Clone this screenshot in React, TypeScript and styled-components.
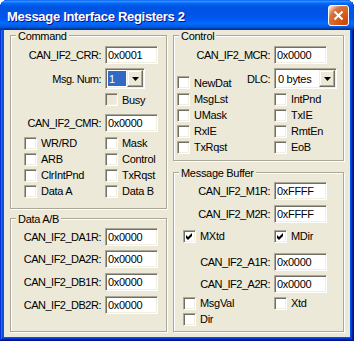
import React from 'react'
import styled, { createGlobalStyle } from 'styled-components'

const font = `'Liberation Sans', Arial, sans-serif`

const GlobalStyle = createGlobalStyle`
  html, body {
    margin: 0;
    padding: 0;
    background: #ffffff;
  }
`

const Window = styled.div`
  width: 354px;
  height: 341px;
  box-sizing: border-box;
  display: flex;
  flex-direction: column;
  border-radius: 8px 8px 0 0;
  background: #0054e3;
  box-shadow: inset -1px -1px #00138c, inset 1px 1px #0831d9,
    inset -2px -2px #001ea0, inset 2px 2px #166aee, inset -3px -3px #003bda,
    inset 3px 3px #0855dd;
  font-family: ${font};
  font-size: 11px;
  letter-spacing: -0.3px;
  color: #000;
`

const TitleBar = styled.div`
  height: 30px;
  flex: none;
  display: flex;
  align-items: flex-start;
  justify-content: space-between;
  padding: 0 5px 0 7px;
  border-radius: 8px 8px 0 0;
  background: linear-gradient(
    180deg,
    #0058ee 0%,
    #3a93ff 4%,
    #288eff 6%,
    #127dff 8%,
    #036ffc 10%,
    #0262ee 14%,
    #0057e5 20%,
    #0054e3 24%,
    #0055eb 56%,
    #005bf5 66%,
    #026afe 76%,
    #0062ef 86%,
    #0052d6 92%,
    #0040ab 94%,
    #003092 100%
  );
`

const Title = styled.span`
  margin-top: 10px;
  line-height: 14px;
  font-size: 13px;
  font-weight: bold;
  color: #fff;
  text-shadow: 1px 1px #0f1089;
  letter-spacing: -0.3px;
`

const CloseButton = styled.div`
  margin-top: 5px;
  width: 21px;
  height: 21px;
  box-sizing: border-box;
  border: 1px solid #fff;
  border-radius: 3px;
  background: radial-gradient(
    circle at 90% 90%,
    #cc4600 0%,
    #dc6527 55%,
    #cd7546 70%,
    #ffccb2 90%,
    #fff 100%
  );
  display: flex;
  align-items: center;
  justify-content: center;
`

const Body = styled.div`
  flex: 1;
  margin: 0 4px 4px;
  padding: 0 6px;
  background: #ece9d8;
  display: grid;
  grid-template-columns: 157px 171px;
  column-gap: 6px;
  align-items: start;
`

const Column = styled.div`
  display: flex;
  flex-direction: column;
`

const GroupBox = styled.div<{ $top: number; $height: number; $pad: number }>`
  position: relative;
  box-sizing: border-box;
  margin-top: ${(p) => p.$top}px;
  height: ${(p) => p.$height}px;
  padding-left: ${(p) => p.$pad}px;
  border: 1px solid #aca899;
  box-shadow: inset 1px 1px #fff, 1px 1px #fff;
  display: flex;
  flex-direction: column;
`

const Legend = styled.span`
  position: absolute;
  top: -6px;
  left: 5px;
  padding: 0 2px;
  line-height: 13px;
  background: #ece9d8;
`

const Row = styled.div<{ $lead: number; $top: number; $h: number }>`
  display: grid;
  grid-template-columns: ${(p) => p.$lead}px 1fr;
  align-items: center;
  height: ${(p) => p.$h}px;
  margin-top: ${(p) => p.$top}px;
`

const Label = styled.span`
  display: flex;
  justify-content: flex-end;
  white-space: nowrap;
  padding-right: 4px;
  letter-spacing: -0.5px;
`

const Lead = styled.div`
  display: flex;
  align-items: center;
  justify-content: space-between;
  align-self: stretch;
`

const TextBox = styled.input`
  box-sizing: border-box;
  width: 53px;
  height: 18px;
  margin: 0;
  padding: 0 0 0 2px;
  border: 1px solid;
  border-color: #aca899 #fff #fff #aca899;
  box-shadow: inset 1px 1px #716f64, inset -1px -1px #f1efe2;
  background: #fff;
  font: 11px ${font};
  letter-spacing: -0.3px;
  color: #000;
  outline: none;
`

const Combo = styled.div<{ $w: number }>`
  box-sizing: border-box;
  width: ${(p) => p.$w}px;
  height: 21px;
  padding: 1px;
  border: 1px solid;
  border-color: #aca899 #fff #fff #aca899;
  box-shadow: inset 1px 1px #716f64, inset -1px -1px #f1efe2;
  background: #fff;
  display: flex;
  gap: 1px;
`

const ComboValue = styled.div`
  flex: 1;
  display: flex;
  align-items: stretch;
  padding: 1px 0 1px 1px;
`

const ComboText = styled.span<{ $selected?: boolean }>`
  flex: 1;
  display: flex;
  align-items: center;
  padding-left: 1px;
  background: ${(p) => (p.$selected ? '#316ac5' : 'transparent')};
  color: ${(p) => (p.$selected ? '#fff' : '#000')};
`

const DropButton = styled.div`
  width: 16px;
  box-sizing: border-box;
  background: #ece9d8;
  border: 1px solid;
  border-color: #f1efe2 #716f64 #716f64 #f1efe2;
  box-shadow: inset -1px -1px #aca899, inset 1px 1px #fff;
  display: flex;
  align-items: center;
  justify-content: center;
`

const Check = styled.label<{ $drop?: boolean }>`
  display: flex;
  align-items: center;
  gap: 4px;
  height: 13px;
  white-space: nowrap;
  align-self: ${(p) => (p.$drop ? 'flex-end' : 'center')};
`

const Box = styled.span<{ $disabled?: boolean }>`
  flex: none;
  width: 13px;
  height: 13px;
  box-sizing: border-box;
  border: 1px solid;
  border-color: #aca899 #fff #fff #aca899;
  box-shadow: inset 1px 1px #716f64, inset -1px -1px #f1efe2;
  background: ${(p) => (p.$disabled ? '#ece9d8' : '#fff')};
  display: flex;
  align-items: center;
  justify-content: center;
`

function CheckBox({
  label,
  checked,
  disabled,
  drop,
}: {
  label: string
  checked?: boolean
  disabled?: boolean
  drop?: boolean
}) {
  return (
    <Check $drop={drop}>
      <Box $disabled={disabled}>
        {checked && (
          <svg width="9" height="9" viewBox="0 0 9 9">
            <polygon points="1,3 3,5 7,1 7,4 3,8 1,6" fill="#000" />
          </svg>
        )}
      </Box>
      {label}
    </Check>
  )
}

function DropDown({ width, value, selected }: { width: number; value: string; selected?: boolean }) {
  return (
    <Combo $w={width}>
      <ComboValue>
        <ComboText $selected={selected}>{value}</ComboText>
      </ComboValue>
      <DropButton>
        <svg width="7" height="4" viewBox="0 0 7 4">
          <polygon points="0,0 7,0 3.5,4" fill="#000" />
        </svg>
      </DropButton>
    </Combo>
  )
}

const commandChecks = [
  ['WR/RD', 'Mask'],
  ['ARB', 'Control'],
  ['ClrIntPnd', 'TxRqst'],
  ['Data A', 'Data B'],
]

const controlChecks = [
  ['MsgLst', 'IntPnd'],
  ['UMask', 'TxIE'],
  ['RxIE', 'RmtEn'],
  ['TxRqst', 'EoB'],
]

const dataRegs = [
  ['CAN_IF2_DA1R:', 9],
  ['CAN_IF2_DA2R:', 4],
  ['CAN_IF2_DB1R:', 5],
  ['CAN_IF2_DB2R:', 5],
] as const

export default function App() {
  return (
    <>
      <GlobalStyle />
      <Window>
        <TitleBar>
          <Title>Message Interface Registers 2</Title>
          <CloseButton>
            <svg width="11" height="11" viewBox="0 0 11 11">
              <path d="M1.5 1.5 L9.5 9.5 M9.5 1.5 L1.5 9.5" stroke="#fff" strokeWidth="2" />
            </svg>
          </CloseButton>
        </TitleBar>
        <Body>
          <Column>
            <GroupBox $top={5} $height={174} $pad={13}>
              <Legend>Command</Legend>
              <Row $lead={81} $top={10} $h={18}>
                <Label>CAN_IF2_CRR:</Label>
                <TextBox readOnly value="0x0001" />
              </Row>
              <Row $lead={81} $top={4} $h={21}>
                <Label>Msg. Num:</Label>
                <DropDown width={40} value="1" selected />
              </Row>
              <Row $lead={81} $top={4} $h={13}>
                <span />
                <CheckBox label="Busy" disabled />
              </Row>
              <Row $lead={81} $top={8} $h={18}>
                <Label>CAN_IF2_CMR:</Label>
                <TextBox readOnly value="0x0000" />
              </Row>
              {commandChecks.map(([a, b], i) => (
                <Row key={a} $lead={81} $top={i === 0 ? 3 : 0} $h={16}>
                  <CheckBox label={a} />
                  <CheckBox label={b} />
                </Row>
              ))}
            </GroupBox>
            <GroupBox $top={9} $height={114} $pad={13}>
              <Legend>Data A/B</Legend>
              {dataRegs.map(([name, top]) => (
                <Row key={name} $lead={81} $top={top} $h={18}>
                  <Label>{name}</Label>
                  <TextBox readOnly value="0x0000" />
                </Row>
              ))}
            </GroupBox>
          </Column>
          <Column>
            <GroupBox $top={5} $height={126} $pad={3}>
              <Legend>Control</Legend>
              <Row $lead={97} $top={10} $h={18}>
                <Label>CAN_IF2_MCR:</Label>
                <TextBox readOnly value="0x0000" />
              </Row>
              <Row $lead={97} $top={4} $h={21}>
                <Lead>
                  <CheckBox label="NewDat" drop />
                  <Label>DLC:</Label>
                </Lead>
                <DropDown width={63} value="0 bytes" />
              </Row>
              {controlChecks.map(([a, b], i) => (
                <Row key={a} $lead={97} $top={i === 0 ? 2 : 0} $h={16}>
                  <CheckBox label={a} />
                  <CheckBox label={b} />
                </Row>
              ))}
            </GroupBox>
            <GroupBox $top={11} $height={160} $pad={9}>
              <Legend>Message Buffer</Legend>
              <Row $lead={91} $top={9} $h={18}>
                <Label>CAN_IF2_M1R:</Label>
                <TextBox readOnly value="0xFFFF" />
              </Row>
              <Row $lead={91} $top={5} $h={18}>
                <Label>CAN_IF2_M2R:</Label>
                <TextBox readOnly value="0xFFFF" />
              </Row>
              <Row $lead={91} $top={5} $h={16}>
                <CheckBox label="MXtd" checked />
                <CheckBox label="MDir" checked />
              </Row>
              <Row $lead={91} $top={9} $h={18}>
                <Label>CAN_IF2_A1R:</Label>
                <TextBox readOnly value="0x0000" />
              </Row>
              <Row $lead={91} $top={4} $h={18}>
                <Label>CAN_IF2_A2R:</Label>
                <TextBox readOnly value="0x0000" />
              </Row>
              <Row $lead={91} $top={2} $h={16}>
                <CheckBox label="MsgVal" />
                <CheckBox label="Xtd" />
              </Row>
              <Row $lead={91} $top={0} $h={16}>
                <CheckBox label="Dir" />
              </Row>
            </GroupBox>
          </Column>
        </Body>
      </Window>
    </>
  )
}
